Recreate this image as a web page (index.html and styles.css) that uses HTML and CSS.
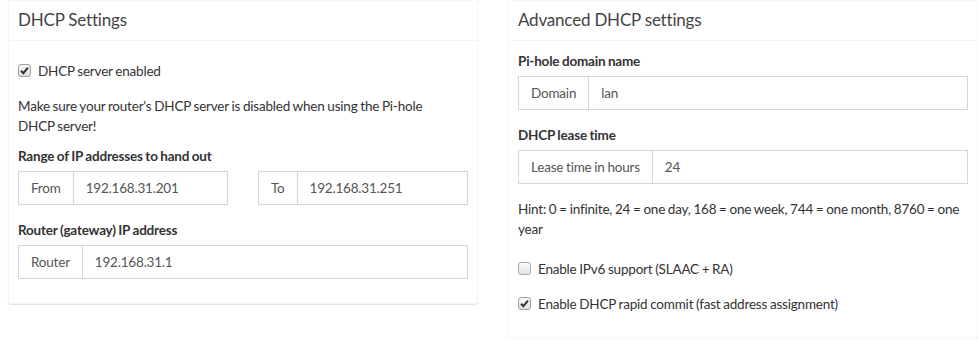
FILE: index.html
```html
<!DOCTYPE html>
<html lang="en">
<head>
<meta charset="utf-8">
<title>DHCP</title>
<link rel="stylesheet" href="styles.css">
</head>
<body>
<div class="page">
  <section class="box">
    <div class="box-header"><h3 class="box-title">DHCP Settings</h3></div>
    <div class="box-body">
      <label class="check">
        <svg class="cb" width="13" height="13" viewBox="0 0 13 13"><defs><linearGradient id="g1" x1="0" y1="0" x2="0" y2="1"><stop offset="0" stop-color="#fbfbfb"/><stop offset="1" stop-color="#dedede"/></linearGradient></defs><rect x="0.5" y="0.5" width="12" height="12" rx="2.5" fill="url(#g1)" stroke="#9f9f9f"/><path d="M3 6.8 L5.3 9.2 L10 3.6" fill="none" stroke="#333" stroke-width="2"/></svg>
        <span>DHCP server enabled</span>
      </label>
      <p class="note">Make sure your router's DHCP server is disabled when using the Pi-hole DHCP server!</p>
      <div class="form-group">
        <label class="field-label">Range of IP addresses to hand out</label>
        <div class="pair">
          <div class="input-group"><span class="addon">From</span><input class="input" type="text" value="192.168.31.201"></div>
          <div class="input-group"><span class="addon">To</span><input class="input" type="text" value="192.168.31.251"></div>
        </div>
      </div>
      <div class="form-group">
        <label class="field-label">Router (gateway) IP address</label>
        <div class="input-group"><span class="addon">Router</span><input class="input" type="text" value="192.168.31.1"></div>
      </div>
    </div>
  </section>

  <section class="box">
    <div class="box-header"><h3 class="box-title">Advanced DHCP settings</h3></div>
    <div class="box-body">
      <div class="form-group">
        <label class="field-label">Pi-hole domain name</label>
        <div class="input-group"><span class="addon">Domain</span><input class="input" type="text" value="lan"></div>
      </div>
      <div class="form-group">
        <label class="field-label">DHCP lease time</label>
        <div class="input-group"><span class="addon">Lease time in hours</span><input class="input" type="text" value="24"></div>
      </div>
      <p class="hint">Hint: 0 = infinite, 24 = one day, 168 = one week, 744 = one month, 8760 = one year</p>
      <label class="check">
        <svg class="cb" width="13" height="13" viewBox="0 0 13 13"><defs><linearGradient id="g2" x1="0" y1="0" x2="0" y2="1"><stop offset="0" stop-color="#fbfbfb"/><stop offset="1" stop-color="#e2e2e2"/></linearGradient></defs><rect x="0.5" y="0.5" width="12" height="12" rx="2.5" fill="url(#g2)" stroke="#ababab"/></svg>
        <span>Enable IPv6 support (SLAAC + RA)</span>
      </label>
      <label class="check last">
        <svg class="cb" width="13" height="13" viewBox="0 0 13 13"><defs><linearGradient id="g3" x1="0" y1="0" x2="0" y2="1"><stop offset="0" stop-color="#fbfbfb"/><stop offset="1" stop-color="#dedede"/></linearGradient></defs><rect x="0.5" y="0.5" width="12" height="12" rx="2.5" fill="url(#g3)" stroke="#9f9f9f"/><path d="M3 6.8 L5.3 9.2 L10 3.6" fill="none" stroke="#333" stroke-width="2"/></svg>
        <span>Enable DHCP rapid commit (fast address assignment)</span>
      </label>
    </div>
  </section>
</div>
</body>
</html>
```

FILE: styles.css
```css
* { box-sizing: border-box; }
html, body { margin: 0; padding: 0; background: #fff; }
body {
  font-family: Lato, "Liberation Sans", sans-serif;
  font-size: 13.5px;
  letter-spacing: -0.2px;
  word-spacing: -0.5px;
  line-height: 20px;
  color: #333;
}
.page {
  display: grid;
  grid-template-columns: 470px 470px;
  column-gap: 30px;
  padding-left: 8px;
  align-items: start;
}
.box {
  background: #fff;
  border-radius: 0 0 3px 3px;
  box-shadow: inset 0 0 0 1px #f5f5f5, 0 1px 1px rgba(0,0,0,0.12);
}
.box-header {
  padding: 10px;
  border-bottom: 1px solid #f4f4f4;
}
.box-title {
  margin: 0;
  font-size: 17px;
  letter-spacing: -0.2px;
  word-spacing: 0;
  line-height: 19.8px;
  font-weight: normal;
  color: #444;
}
.box-body { padding: 10px; }
.check {
  display: flex;
  align-items: center;
  margin: 10px 0 15px;
  height: 20px;
  font-weight: normal;
}
.check.last { margin-bottom: 15px; }
.cb { flex: none; margin-right: 7px; margin-top: -1px; }
.note { margin: 0 0 10px; max-width: 440px; }
.hint { margin: 0 0 20px; }
.hint + .check { margin-top: 0; }
.check + .check { margin-top: 0; }
.form-group { margin-bottom: 15px; }
.field-label {
  display: block;
  font-weight: bold;
  margin-bottom: 5px;
}
.pair {
  display: grid;
  grid-template-columns: 210px 210px;
  column-gap: 30px;
}
.input-group {
  display: flex;
  height: 34px;
}
.addon {
  display: flex;
  align-items: center;
  padding: 0 12px;
  border: 1px solid #d2d6de;
  border-right: 0;
  color: #555;
  white-space: nowrap;
}
.input {
  flex: 1;
  min-width: 0;
  height: 34px;
  margin: 0;
  padding: 6px 12px;
  border: 1px solid #d2d6de;
  border-radius: 0;
  font: inherit;
  letter-spacing: inherit;
  word-spacing: inherit;
  color: #555;
  background: #fff;
  outline: none;
}
```
